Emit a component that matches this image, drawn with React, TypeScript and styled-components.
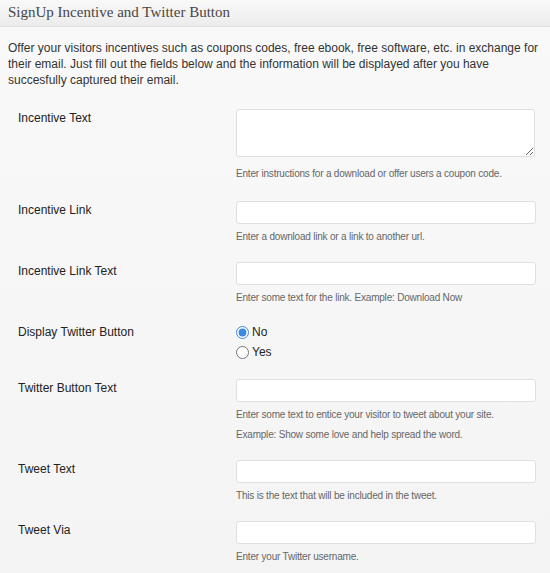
import { FC } from 'react';
import styled, { createGlobalStyle } from 'styled-components';

const GlobalStyle = createGlobalStyle`
  html, body {
    margin: 0;
    padding: 0;
    background: #f7f7f7;
  }
  body {
    font-family: 'Liberation Sans', Arial, sans-serif;
    color: #333;
  }
`;

const Panel = styled.div`
  width: 550px;
  min-height: 573px;
  background: linear-gradient(to bottom, #f9f9f9, #f4f4f4);
`;

const Header = styled.h3`
  margin: 0;
  height: 27px;
  box-sizing: border-box;
  padding: 4px 8px 0;
  font-family: 'Liberation Serif', Georgia, serif;
  font-size: 15px;
  font-weight: normal;
  color: #464646;
  background: linear-gradient(to bottom, #f9f9f9, #ececec);
  border-bottom: 1px solid #dfdfdf;
`;

const Intro = styled.p`
  margin: 13px 8px 13px;
  font-size: 12px;
  line-height: 16px;
  color: #333;
`;

const Row = styled.div`
  display: grid;
  grid-template-columns: 218px 300px;
  padding: 8px 0 10px 18px;
`;

const Label = styled.label`
  padding-top: 2px;
  font-size: 12px;
  line-height: 14px;
  color: #222;
`;

const Field = styled.div`
  display: flex;
  flex-direction: column;
`;

const TextInput = styled.input`
  box-sizing: border-box;
  width: 300px;
  height: 23px;
  margin: 0;
  border: 1px solid #dfdfdf;
  border-radius: 3px;
  background: #fff;
  font: 12px 'Liberation Sans', Arial, sans-serif;
`;

const TextArea = styled.textarea`
  box-sizing: border-box;
  width: 299px;
  height: 48px;
  margin: 0 0 4px;
  border: 1px solid #dfdfdf;
  border-radius: 3px;
  background: #fff;
  resize: both;
  font: 12px 'Liberation Sans', Arial, sans-serif;
`;

const Help = styled.span<{ $extra?: number }>`
  display: block;
  margin-top: 5px;
  margin-bottom: ${(p) => p.$extra ?? 0}px;
  font-size: 10px;
  letter-spacing: -0.2px;
  line-height: 15px;
  color: #666;
`;

const RadioList = styled.div`
  display: flex;
  flex-direction: column;
  margin: -1px 0 -1px;
`;

const RadioLabel = styled.label`
  display: flex;
  align-items: center;
  height: 20px;
  font-size: 12px;
  color: #222;
  input {
    margin: 0 3px 0 0;
    width: 13px;
    height: 13px;
    accent-color: #3b88e0;
  }
`;

type TextRow = {
  label: string;
  help: string[];
  multiline?: boolean;
};

const topRows: TextRow[] = [
  {
    label: 'Incentive Text',
    help: ['Enter instructions for a download or offer users a coupon code.'],
    multiline: true,
  },
  { label: 'Incentive Link', help: ['Enter a download link or a link to another url.'] },
  { label: 'Incentive Link Text', help: ['Enter some text for the link. Example: Download Now'] },
];

const bottomRows: TextRow[] = [
  {
    label: 'Twitter Button Text',
    help: [
      'Enter some text to entice your visitor to tweet about your site.',
      'Example: Show some love and help spread the word.',
    ],
  },
  { label: 'Tweet Text', help: ['This is the text that will be included in the tweet.'] },
  { label: 'Tweet Via', help: ['Enter your Twitter username.'] },
];

const FieldRow: FC<{ row: TextRow }> = ({ row }) => (
  <Row>
    <Label>{row.label}</Label>
    <Field>
      {row.multiline ? <TextArea /> : <TextInput type="text" />}
      {row.help.map((h) => (
        <Help key={h} $extra={row.multiline ? 2 : 0}>
          {h}
        </Help>
      ))}
    </Field>
  </Row>
);

const App: FC = () => (
  <Panel>
    <GlobalStyle />
    <Header>SignUp Incentive and Twitter Button</Header>
    <Intro>
      Offer your visitors incentives such as coupons codes, free ebook, free software, etc. in
      exchange for their email. Just fill out the fields below and the information will be
      displayed after you have succesfully captured their email.
    </Intro>
    {topRows.map((r) => (
      <FieldRow key={r.label} row={r} />
    ))}
    <Row>
      <Label>Display Twitter Button</Label>
      <RadioList>
        <RadioLabel>
          <input type="radio" name="twitter" defaultChecked />
          No
        </RadioLabel>
        <RadioLabel>
          <input type="radio" name="twitter" />
          Yes
        </RadioLabel>
      </RadioList>
    </Row>
    {bottomRows.map((r) => (
      <FieldRow key={r.label} row={r} />
    ))}
  </Panel>
);

export default App;
